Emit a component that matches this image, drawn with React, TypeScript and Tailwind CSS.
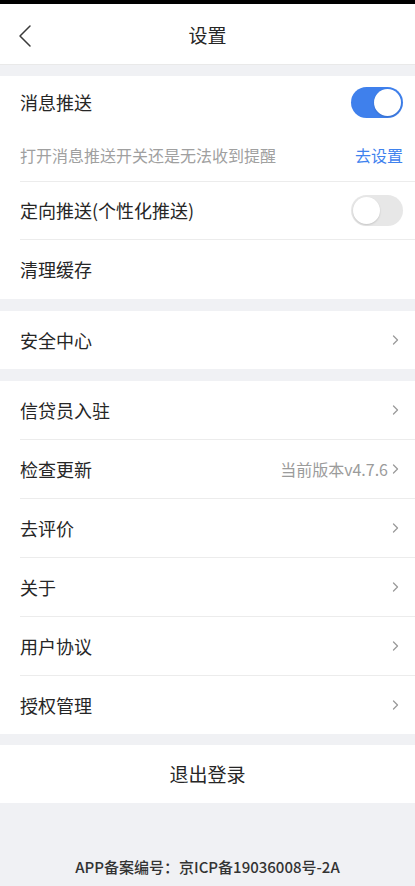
import React, { useState } from "react";

const font = { fontFamily: '"Noto Sans CJK SC", "Noto Sans", sans-serif' };

const Chevron = () => (
  <svg width="7" height="12" viewBox="0 0 7 12" className="shrink-0">
    <path d="M1.5 2l4 4-4 4" fill="none" stroke="#9a9a9a" strokeWidth="1.3" strokeLinecap="round" strokeLinejoin="round" />
  </svg>
);

interface ToggleProps {
  on: boolean;
  onChange: () => void;
}

const Toggle: React.FC<ToggleProps> = ({ on, onChange }) => (
  <button
    onClick={onChange}
    className={`relative w-[52px] h-[31px] rounded-full shrink-0 ${on ? "bg-[#3f80ec]" : "bg-[#e7e7e7]"}`}
  >
    <span
      className={`absolute top-[2px] w-[27px] h-[27px] rounded-full bg-white shadow-[0_1px_2px_rgba(0,0,0,0.15)] ${on ? "right-[2px]" : "left-[2px]"}`}
    ></span>
  </button>
);

interface RowProps {
  label: string;
  extra?: string;
  last?: boolean;
}

const LinkRow: React.FC<RowProps> = ({ label, extra, last }) => (
  <div className="pl-[20px]">
    <div className={`flex items-center justify-between pr-[16px] ${last ? "h-[58px]" : "h-[59px] border-b border-[#ececec]"}`}>
      <span className="text-[18px] text-[#262626]">{label}</span>
      <div className="flex items-center gap-[4px]">
        {extra && <span className="text-[16px] text-[#9b9b9b]">{extra}</span>}
        <Chevron />
      </div>
    </div>
  </div>
);

const App: React.FC = () => {
  const [push, setPush] = useState(true);
  const [targeted, setTargeted] = useState(false);

  return (
    <div className="min-h-[886px] w-full bg-[#f0f1f4] flex flex-col" style={font}>
      <div className="h-[4px] bg-black"></div>
      <div className="h-[61px] bg-white border-b border-[#e9e9e9] flex items-center justify-center relative">
        <button className="absolute left-[16px] top-[18px] p-[2px]">
          <svg width="14" height="24" viewBox="0 0 14 24">
            <path d="M12 2L2 12l10 10" fill="none" stroke="#3a3a3a" strokeWidth="1.5" strokeLinecap="round" strokeLinejoin="round" />
          </svg>
        </button>
        <h1 className="text-[19px] text-[#262626] pt-[2px]">设置</h1>
      </div>

      <div className="mt-[11px] bg-white">
        <div className="pl-[20px]">
          <div className="border-b border-[#ececec] pr-[12px]">
            <div className="h-[52px] flex items-center justify-between pt-[1px]">
              <span className="text-[18px] text-[#262626]">消息推送</span>
              <Toggle on={push} onChange={() => setPush(!push)} />
            </div>
            <div className="h-[53px] flex items-center justify-between">
              <span className="text-[16px] text-[#a0a0a0]">打开消息推送开关还是无法收到提醒</span>
              <span className="text-[16px] text-[#3f82ee]">去设置</span>
            </div>
          </div>
        </div>
        <div className="pl-[20px]">
          <div className="h-[58px] flex items-center justify-between pr-[12px] border-b border-[#ececec]">
            <span className="text-[18px] text-[#262626]">定向推送(个性化推送)</span>
            <Toggle on={targeted} onChange={() => setTargeted(!targeted)} />
          </div>
        </div>
        <div className="pl-[20px]">
          <div className="h-[59px] flex items-center">
            <span className="text-[18px] text-[#262626]">清理缓存</span>
          </div>
        </div>
      </div>

      <div className="mt-[12px] bg-white">
        <LinkRow label="安全中心" last />
      </div>

      <div className="mt-[12px] bg-white">
        <LinkRow label="信贷员入驻" />
        <LinkRow label="检查更新" extra="当前版本v4.7.6" />
        <LinkRow label="去评价" />
        <LinkRow label="关于" />
        <LinkRow label="用户协议" />
        <LinkRow label="授权管理" last />
      </div>

      <button className="mt-[11px] h-[58px] bg-white flex items-center justify-center">
        <span className="text-[19px] text-[#262626]">退出登录</span>
      </button>

      <div className="flex-1 flex items-end justify-center pb-[8px]">
        <span className="text-[15px] font-medium text-[#333333]">APP备案编号：京ICP备19036008号-2A</span>
      </div>
    </div>
  );
};

export default App;
